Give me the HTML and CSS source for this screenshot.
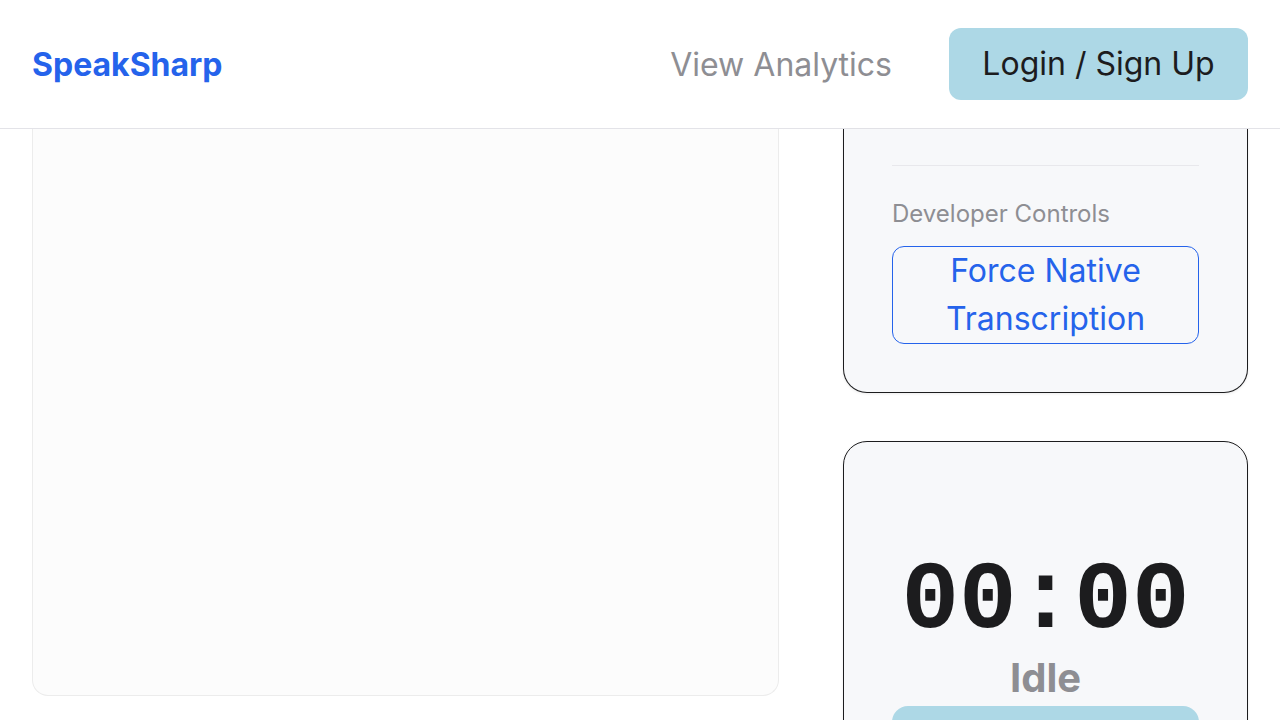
FILE: index.html
```html
<!DOCTYPE html>
<html lang="en">
<head>
<meta charset="utf-8">
<title>SpeakSharp</title>
<link rel="stylesheet" href="styles.css">
</head>
<body>
<header class="topbar">
  <a class="logo" href="#">SpeakSharp</a>
  <nav class="nav">
    <a class="nav-link" href="#">View Analytics</a>
    <button class="login-btn">Login / Sign Up</button>
  </nav>
</header>
<main class="layout">
  <section class="transcript-card"></section>
  <aside class="side">
    <div class="panel panel-settings">
      <hr class="divider">
      <div class="dev-label">Developer Controls</div>
      <button class="outline-btn">Force Native Transcription</button>
    </div>
    <div class="panel panel-timer">
      <div class="timer">00:00</div>
      <div class="status">Idle</div>
      <button class="start-btn"></button>
    </div>
  </aside>
</main>
</body>
</html>
```
FILE: styles.css
```css
* { box-sizing: border-box; }
html, body { margin: 0; padding: 0; height: 100%; overflow: hidden; }
body {
  font-family: "Inter", "Noto Sans", sans-serif;
  background: #ffffff;
  color: #1c1c1e;
}
.topbar {
  height: 129px;
  border-bottom: 1px solid #e3e3e8;
  display: flex;
  align-items: center;
  justify-content: space-between;
  padding: 0 32px;
  background: #ffffff;
}
.logo {
  font-size: 32px;
  font-weight: 700;
  color: #2563eb;
  text-decoration: none;
}
.nav { display: flex; align-items: center; gap: 57px; }
.nav-link {
  font-size: 32px;
  color: #8e8e93;
  text-decoration: none;
}
.login-btn {
  font-family: inherit;
  font-size: 32px;
  line-height: 48px;
  color: #1c1c1e;
  background: #add8e6;
  border: none;
  border-radius: 12px;
  padding: 12px 0;
  width: 299px;
  height: 72px;
}
.layout {
  display: grid;
  grid-template-columns: 1fr 405px;
  gap: 64px;
  padding: 0 32px;
}
.transcript-card {
  height: 567px;
  background: #fcfcfc;
  border: 1px solid #ececec;
  border-top: none;
  border-radius: 0 0 16px 16px;
}
.side { display: flex; flex-direction: column; gap: 48px; }
.panel {
  background: #f7f8fa;
  border: 1px solid #1c1c1e;
  border-radius: 24px;
  padding: 0 48px 48px;
  box-shadow: 0 1px 3px rgba(0,0,0,0.08);
}
.panel-settings {
  border-top: none;
  border-radius: 0 0 24px 24px;
  padding-top: 36px;
}
.divider {
  border: none;
  border-top: 1px solid #e8e8ec;
  margin: 0 0 30px;
}
.dev-label {
  font-size: 24px;
  line-height: 36px;
  color: #8e8e93;
  margin-bottom: 14px;
}
.outline-btn {
  width: 100%;
  font-family: inherit;
  font-size: 32px;
  line-height: 48px;
  color: #2563eb;
  background: transparent;
  border: 1px solid #2563eb;
  border-radius: 12px;
  padding: 0 40px;
}
.panel-timer {
  display: flex;
  flex-direction: column;
  align-items: center;
  padding-top: 112px;
  height: 400px;
}
.timer {
  font-family: "Liberation Mono", "DejaVu Sans Mono", monospace;
  font-weight: 700;
  font-size: 96px;
  line-height: 96px;
  color: #1c1c1e;
}
.status {
  font-size: 40px;
  font-weight: 700;
  line-height: 48px;
  color: #8e8e93;
  margin-top: 4px;
}
.start-btn {
  width: 100%;
  height: 72px;
  margin-top: 4px;
  background: #add8e6;
  border: none;
  border-radius: 16px;
}
```
